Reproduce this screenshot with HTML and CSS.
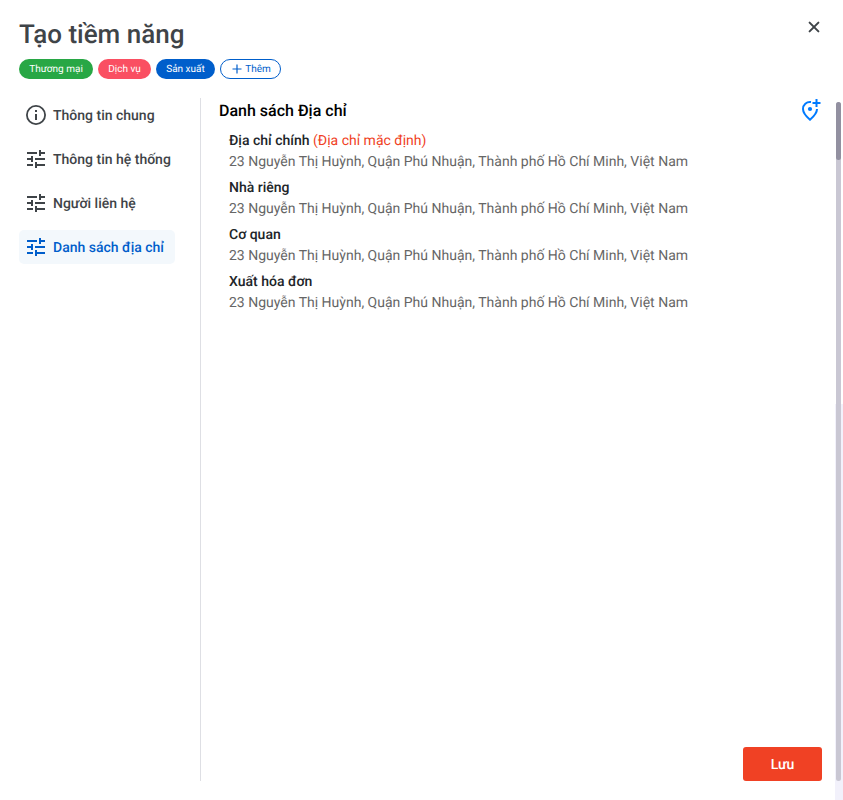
FILE: index.html
```html
<!DOCTYPE html>
<html lang="vi">
<head>
<meta charset="utf-8">
<title>Tạo tiềm năng</title>
<link rel="stylesheet" href="styles.css">
</head>
<body>
<svg class="defs" width="0" height="0">
  <symbol id="tune" viewBox="0 0 24 24"><path d="M3 17v2h6v-2H3zM3 5v2h10V5H3zm10 16v-2h8v-2h-8v-2h-2v6h2zM7 9v2H3v2h4v2h2V9H7zm14 4v-2H11v2h10zm-6-4h2V7h4V5h-4V3h-2v6z"/></symbol>
</svg>
<div class="dialog">
  <main class="content">
    <header class="header">
      <h1>Tạo tiềm năng</h1>
      <svg class="close" width="12" height="12" viewBox="0 0 12 12"><path d="M1.600 1.600l8.800 8.800M10.400 1.600l-8.800 8.800"/></svg>
    </header>
    <div class="tags">
      <span class="tag trade">Thương mại</span>
      <span class="tag service">Dịch vụ</span>
      <span class="tag produce">Sản xuất</span>
      <span class="tag add"><svg width="10" height="10" viewBox="0 0 10 10"><path d="M5 .5v9M.5 5h9"/></svg>Thêm</span>
    </div>
    <div class="body">
      <nav class="nav">
        <a class="item"><svg width="24" height="24" viewBox="0 0 24 24"><path d="M11 17h2v-6h-2v6zm0-8h2V7h-2v2zm1-7a10 10 0 1 0 0 20 10 10 0 0 0 0-20zm0 18.200a8.200 8.200 0 1 1 0-16.400 8.200 8.200 0 0 1 0 16.400z"/></svg>Thông tin chung</a>
        <a class="item"><svg width="24" height="24"><use href="#tune"/></svg>Thông tin hệ thống</a>
        <a class="item"><svg width="24" height="24"><use href="#tune"/></svg>Người liên hệ</a>
        <a class="item active"><svg width="24" height="24"><use href="#tune"/></svg>Danh sách địa chỉ</a>
      </nav>
      <section class="panel">
        <div class="panel-head">
          <h2>Danh sách Địa chỉ</h2>
          <svg class="pin" width="20" height="22" viewBox="0 0 20 22"><path d="M10 3.100C5.500 2.500 2 5.800 2 10c0 3.300 2.300 6.700 7 10.700 4.700-4 7-7.400 7-10.700M15.500 0v8M11.500 4h8"/><circle cx="9" cy="10" r="2.100"/></svg>
        </div>
        <dl class="addresses">
          <dt>Địa chỉ chính <span>(Địa chỉ mặc định)</span></dt>
          <dd>23 Nguyễn Thị Huỳnh, Quận Phú Nhuận, Thành phố Hồ Chí Minh, Việt Nam</dd>
          <dt>Nhà riêng</dt>
          <dd>23 Nguyễn Thị Huỳnh, Quận Phú Nhuận, Thành phố Hồ Chí Minh, Việt Nam</dd>
          <dt>Cơ quan</dt>
          <dd>23 Nguyễn Thị Huỳnh, Quận Phú Nhuận, Thành phố Hồ Chí Minh, Việt Nam</dd>
          <dt>Xuất hóa đơn</dt>
          <dd>23 Nguyễn Thị Huỳnh, Quận Phú Nhuận, Thành phố Hồ Chí Minh, Việt Nam</dd>
        </dl>
        <button class="save">Lưu</button>
      </section>
    </div>
  </main>
  <aside class="gutter"><div class="track"><div class="thumb"></div></div></aside>
</div>
</body>
</html>
```
FILE: styles.css
```css
* { box-sizing: border-box; }
body { margin: 0; background: #fff; font-family: Roboto, "Liberation Sans", sans-serif; color: #3f4448; overflow: hidden; text-rendering: geometricPrecision; }
h1, h2, dl, dd { margin: 0; }
.defs { display: none; }
.dialog { display: flex; height: 800px; }
.content { flex: 1; display: flex; flex-direction: column; padding: 19px 13px 19px 19px; }
.header { display: flex; justify-content: space-between; height: 40px; padding-right: 2px; }
h1 { font-size: 26px; font-weight: 500; line-height: 32px; }
.close { margin-top: 2px; fill: none; stroke: #3f4448; stroke-width: 2; stroke-linecap: round; }
.tags { display: flex; gap: 5px; height: 20px; }
.tag { display: flex; align-items: center; justify-content: center; height: 20px; border-radius: 10px; color: #fff; font-size: 10px; }
.trade { width: 74px; background: #28a745; }
.service { width: 53px; background: #fa4f62; }
.produce { width: 59px; background: #005ecb; }
.add { width: 61px; gap: 3px; padding-left: 2px; border: 1px solid #005ecb; color: #005ecb; }
.add svg { fill: none; stroke: currentColor; stroke-width: 1.2; }
.body { flex: 1; display: flex; margin-top: 19px; }
.nav { width: 182px; border-right: 1px solid #dedfe4; display: flex; flex-direction: column; align-items: flex-start; gap: 10px; }
.item { display: flex; align-items: center; gap: 5px; height: 34px; padding: 2px 10.500px 0 5px; border-radius: 5px; font-size: 14px; font-weight: 500; white-space: nowrap; }
.item svg { margin-top: -2px; fill: currentColor; }
.active { color: #005ecb; background: #f3f8fc; }
.panel { flex: 1; display: flex; flex-direction: column; padding-left: 18px; }
.panel-head { display: flex; justify-content: space-between; height: 32px; padding-right: 1px; }
h2 { color: #000; font-size: 16px; font-weight: 500; line-height: 25px; }
.pin { margin-top: 1px; fill: none; stroke: #007bff; stroke-width: 2; }
.pin circle { fill: #007bff; stroke: none; }
.addresses { flex: 1; padding: 1px 0 0 10px; font-size: 14px; line-height: 21px; }
dt { color: #212529; font-weight: 500; }
dt span { color: #f04124; font-weight: 400; }
dd { color: #666; margin-bottom: 5px; }
.save { align-self: flex-end; width: 79px; height: 34px; padding: 1px 0 0; border: 0; border-radius: 3px; background: #f04124; color: #fff; font: 500 14px Roboto, sans-serif; text-rendering: geometricPrecision; }
.gutter { width: 8px; padding: 102px 2px 19px 1px; background: linear-gradient(#fff 404px, #f2f1fb 404px); }
.track { height: 679px; border-radius: 3px; background: #c9c7d3; }
.thumb { height: 58px; border-radius: 3px; background: #9290a0; }
```
